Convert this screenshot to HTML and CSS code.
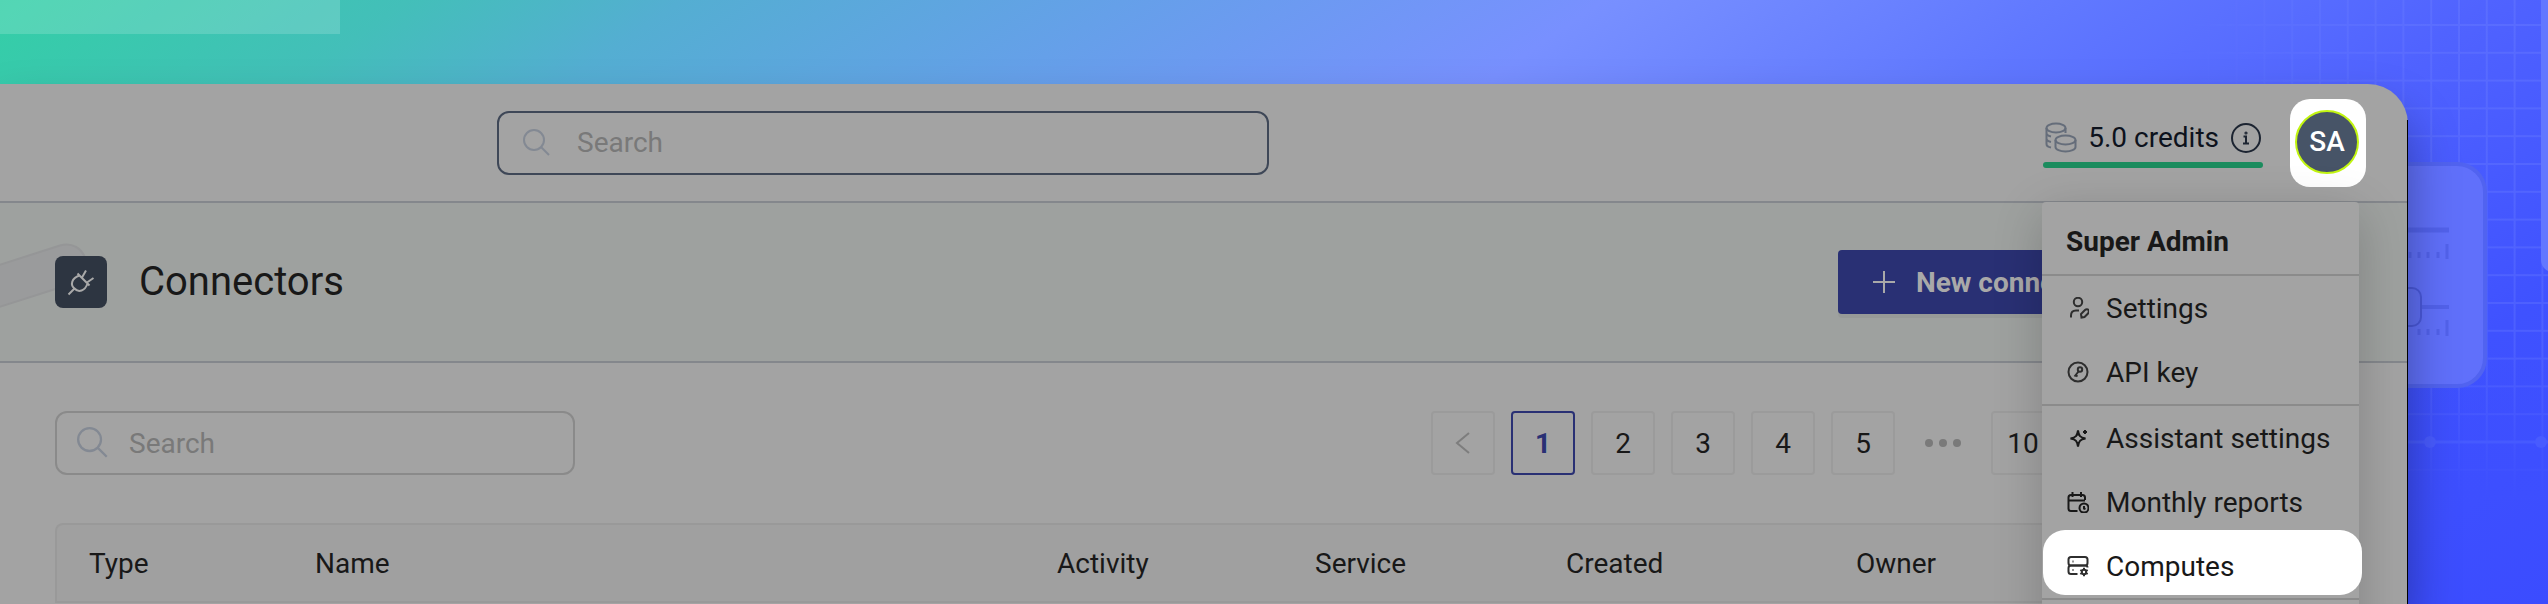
FILE: index.html
```html
<!DOCTYPE html>
<html lang="en">
<head>
<meta charset="utf-8">
<title>Connectors</title>
<link rel="stylesheet" href="styles.css">
</head>
<body>
<div class="stage">
  <div class="backdrop-strip"></div>
  <svg class="backdrop-art" width="380" height="604" viewBox="0 0 380 604" aria-hidden="true">
    <defs>
      <pattern id="grid" x="12" y="24" width="27.8" height="27.8" patternUnits="userSpaceOnUse">
        <path d="M0 1H27.8M1 0V27.8" stroke="#8c9eff" stroke-width="2" fill="none"/>
      </pattern>
      <linearGradient id="fade" x1="0" x2="1" y1="0" y2="0">
        <stop offset="0" stop-color="#fff" stop-opacity="0"/>
        <stop offset=".6" stop-color="#fff" stop-opacity=".16"/>
        <stop offset="1" stop-color="#fff" stop-opacity=".2"/>
      </linearGradient>
      <linearGradient id="fadeDown" x1="0" x2="0" y1="0" y2="1">
        <stop offset=".5" stop-color="#3d4fff" stop-opacity="0"/>
        <stop offset="1" stop-color="#3d4fff"/>
      </linearGradient>
      <mask id="gridMask"><rect width="380" height="500" fill="url(#fade)"/></mask>
    </defs>
    <rect width="380" height="500" fill="url(#grid)" mask="url(#gridMask)"/>
    <rect y="200" x="240" width="140" height="300" fill="url(#fadeDown)"/>
    <path d="M240 442H380" stroke="#465aff" stroke-width="3"/>
    <circle cx="262" cy="442" r="6" fill="#485bff"/>
    <circle cx="373" cy="442" r="6" fill="#485bff"/>
    <rect x="150" y="164" width="167" height="222" rx="28" fill="#6070fb" stroke="#5163f0" stroke-width="4"/>
    <path d="M230 230H281" stroke="#5262ec" stroke-width="5"/>
    <path d="M230 307H281" stroke="#5262ec" stroke-width="4"/>
    <path d="M242 252v6M251 252v6M260 252v6M270 252v6M279 244v15M251 329v6M260 329v6M270 329v6M279 320v16" stroke="#5262ec" stroke-width="3"/>
    <rect x="200" y="288" width="53" height="38" rx="9" fill="#5f6ff5" stroke="#4a59dc" stroke-width="2"/>
    <rect x="373" y="-20" width="40" height="292" rx="12" fill="#6277ff"/>
  </svg>

  <div class="card">
    <header class="topbar">
      <label class="search search-global">
        <svg class="icon-search" viewBox="0 0 28 28" width="28" height="28" aria-hidden="true"><circle cx="11" cy="11" r="10"/><path d="M18 18l8 8"/></svg>
        <input type="search" placeholder="Search" aria-label="Search everywhere">
      </label>
      <div class="account">
        <div class="credits">
          <div class="credits-line">
            <svg class="icon-coins" viewBox="0 0 32 32" width="32" height="32" aria-hidden="true">
              <ellipse cx="11" cy="6" rx="9.5" ry="4.5"/><path d="M1.500 6V22c0 1.500 1.500 3 4.500 3.500M1.500 11c0 1.500 2 3 4.500 3.500M1.500 16.500c0 1.500 2 3 4.500 3.500M20.500 6v5"/>
              <ellipse cx="20.500" cy="18" rx="10" ry="4.500"/><path d="M10.500 18v7c0 2.500 4.500 4.500 10 4.500s10-2 10-4.500v-7"/>
            </svg>
            <span>5.0 credits</span>
            <svg class="icon-info" viewBox="0 0 32 32" width="32" height="32" aria-hidden="true">
              <circle cx="16" cy="16" r="14"/><path d="M13.500 14.500H16v7M13 21.500h6"/><circle cx="16" cy="11" r=".6"/>
            </svg>
          </div>
          <div class="credits-bar"></div>
        </div>
        <div class="avatar-spot"><button class="avatar" type="button">SA</button></div>
      </div>
    </header>

    <section class="title-band">
      <svg class="band-art" width="90" height="80" viewBox="0 0 90 80" aria-hidden="true"><path d="M-4 24L60 3.500C72 0 82 6 86 18S80 40 68 43L-4 66Z" fill="#9a9b9c" stroke="#959697" stroke-width="2"/></svg>
      <span class="title-icon">
        <svg viewBox="0 0 32 32" width="32" height="32" aria-hidden="true"><path d="M12.500 7.500L24.500 19.500M14.500 9.500C6.500 12 5 19 9.500 22.500 13.500 27 20 25 22.500 17.500M9.500 22.500L3.500 28.500M17 11.500L21 4.500M22 16.500L28.500 12"/></svg>
      </span>
      <h1>Connectors</h1>
      <button class="primary" type="button">
        <svg viewBox="0 0 24 24" width="24" height="24" aria-hidden="true"><path d="M12 1v22M1 12h22"/></svg>
        New connector
      </button>
    </section>

    <main class="content">
      <div class="toolbar">
        <label class="search search-local">
          <svg class="icon-search" viewBox="0 0 28 28" width="32" height="32" aria-hidden="true"><circle cx="11" cy="11" r="10"/><path d="M18 18l8 8"/></svg>
          <input type="search" placeholder="Search" aria-label="Search connectors">
        </label>
        <nav class="pages" aria-label="Pages">
          <button type="button" aria-label="Previous"><svg viewBox="0 0 20 20" width="20" height="24" aria-hidden="true"><path d="M16 0L4 10 16 20"/></svg></button>
          <button type="button" class="current">1</button>
          <button type="button">2</button>
          <button type="button">3</button>
          <button type="button">4</button>
          <button type="button">5</button>
          <span class="more"><i></i><i></i><i></i></span>
          <button type="button">10</button>
        </nav>
      </div>
      <div class="table-frame">
        <table>
          <thead>
            <tr>
              <th class="col-type">Type</th>
              <th>Name</th>
              <th class="col-activity">Activity</th>
              <th class="col-service">Service</th>
              <th class="col-created">Created</th>
              <th class="col-owner">Owner</th>
            </tr>
          </thead>
        </table>
      </div>
    </main>

    <div class="menu">
      <div class="menu-title">Super Admin</div>
      <div class="menu-group">
        <button type="button">
          <svg viewBox="0 0 22 22" width="22" height="22" aria-hidden="true"><circle cx="11" cy="5" r="4.200"/><path d="M4 20.500v-2c0-3 2-5 5-5h3M14.500 20.500l-.5-3.500 4-4c1-1 3-1 3.500 0 .5 1 .5 2-.5 3.500l-3.500 3.500z"/></svg>
          Settings
        </button>
        <button type="button">
          <svg viewBox="0 0 22 22" width="22" height="22" aria-hidden="true"><circle cx="11" cy="11" r="9.500"/><circle cx="13" cy="8.500" r="2.200"/><path d="M11.500 10.500L7.500 15.500M8.500 14l2 1.500"/></svg>
          API key
        </button>
      </div>
      <div class="menu-group">
        <button type="button">
          <svg viewBox="0 0 22 22" width="22" height="22" class="bold" aria-hidden="true"><path d="M11 3.500C11.800 9 13 10.500 18.500 11.500 13 12.500 11.800 14 11 19.500 10.200 14 9 12.500 3.500 11.500 9 10.500 10.200 9 11 3.500Z"/><path d="M18 3v4M16 5h4"/></svg>
          Assistant settings
        </button>
        <button type="button">
          <svg viewBox="0 0 22 22" width="22" height="22" class="bold" aria-hidden="true"><path d="M10.500 20H4c-1.500 0-2.500-1-2.500-2.500v-11C1.500 5 2.500 4 4 4h11.500C17 4 18 5 18 6.500V9M1.500 9.500H18M5.500 1v5M14 1v5"/><circle cx="17" cy="17" r="4.500"/><path d="M17 15v2.500l1.500.5"/></svg>
          Monthly reports
        </button>
        <button type="button" class="spot">
          <svg viewBox="0 0 22 22" width="22" height="22" aria-hidden="true"><rect x="1.500" y="2" width="19" height="8.500" rx="2.500"/><path d="M20.500 12.500c0-1.500-1-2-2.500-2H4C2.500 10.500 1.500 11.500 1.500 13v3.500C1.500 18 2.500 19 4 19h6.500M5.500 6.500h1M5.500 15h1"/><circle cx="17" cy="17" r="2.200"/><path d="M17 12.800v2M17 19.200v2M13.300 15l1.800 1M18.900 18l1.800 1M13.300 19l1.800-1M18.900 16l1.800-1"/></svg>
          Computes
        </button>
      </div>
    </div>
  </div>
</div>
</body>
</html>
```
FILE: styles.css
```css
* {
  box-sizing: border-box;
}

body {
  margin: 0;
  font-family: Roboto, "Liberation Sans", sans-serif;
  font-size: 28px;
  line-height: 33px;
  color: #181818;
}

button,
input {
  font: inherit;
  color: inherit;
  margin: 0;
  padding: 0;
  border: 0;
  background: none;
}

svg {
  fill: none;
  stroke: currentColor;
  stroke-width: 2;
  flex: none;
}

.stage {
  position: relative;
  display: flex;
  height: 100vh;
  overflow: hidden;
  padding: 84px 140px 0 0;
  background: linear-gradient(145deg, #33cfa6 0%, #43bfb9 12%, #54aed2 20%, #65a0e9 33%, #7890ff 47%, #6078ff 61%, #5063ff 73%, #3f52ff 87%, #3b4cff 100%);
}

.backdrop-strip {
  position: absolute;
  top: 0;
  left: 0;
  width: 340px;
  height: 34px;
  background: rgba(255, 255, 255, 0.16);
}

.backdrop-art {
  position: absolute;
  top: 0;
  right: 0;
  stroke: none;
}

.card {
  position: relative;
  flex: 1;
  min-width: 0;
  background: #a3a3a3;
  border-radius: 0 40px 0 0;
  box-shadow: 0 30px 50px rgba(0, 0, 0, 0.35);
}

.card::after {
  content: "";
  position: absolute;
  top: 36px;
  right: 0;
  bottom: 0;
  width: 1px;
  background: #000;
}

.topbar {
  display: flex;
  align-items: center;
  justify-content: space-between;
  height: 119px;
  padding: 0 42px 0 497px;
  border-bottom: 2px solid #84878c;
}

.search {
  display: flex;
  align-items: center;
  height: 64px;
  border-radius: 12px;
}

.search input {
  flex: 1;
  min-width: 0;
  outline: 0;
}

.search input::placeholder {
  color: #797979;
  opacity: 1;
}

.icon-search {
  color: #838993;
}

.search-global {
  width: 772px;
  padding: 0 24px;
  gap: 26px;
  border: 2px solid #3e4757;
}

.search-local {
  width: 520px;
  padding: 0 20px;
  gap: 20px;
  border: 2px solid #8a8a8a;
}

.account {
  display: flex;
  align-items: center;
  gap: 27px;
}

.credits {
  padding-top: 4px;
  color: #0d121c;
}

.credits-line {
  display: flex;
  align-items: center;
  gap: 11px;
  padding: 0 1px 0 2px;
}

.icon-coins {
  color: #656d7a;
}

.icon-info {
  color: #1c2431;
}

.credits-bar {
  height: 6px;
  margin-top: 8px;
  border-radius: 3px;
  background: #1b8c5e;
}

.avatar-spot {
  padding: 11px 7px 13px 5px;
  border-radius: 20px;
  background: #fff;
}

.avatar {
  display: block;
  width: 64px;
  height: 64px;
  border: 2px solid #c2f510;
  border-radius: 50%;
  background: #475467;
  color: #fff;
  font-weight: 500;
}

.title-band {
  position: relative;
  display: flex;
  align-items: center;
  height: 160px;
  padding: 0 269px 0 55px;
  background: #9ea19f;
  border-bottom: 2px solid #84878c;
}

.band-art {
  position: absolute;
  left: 0;
  top: 39px;
}

.title-icon {
  position: relative;
  display: grid;
  place-items: center;
  width: 52px;
  height: 52px;
  border-radius: 8px;
  background: #2d3541;
  color: #a9a9a9;
}

h1 {
  margin: 0 auto 0 32px;
  font-size: 40px;
  line-height: 48px;
  font-weight: 400;
}

.primary {
  display: flex;
  align-items: center;
  gap: 20px;
  height: 64px;
  padding: 0 34px;
  border-radius: 4px;
  background: #293074;
  box-shadow: 0 4px 0 rgba(0, 0, 0, 0.04);
  color: #a9a9a9;
  font-weight: 700;
}

.content {
  padding: 48px 56px 0 55px;
}

.toolbar {
  display: flex;
  justify-content: space-between;
  padding-right: 297px;
}

.pages {
  display: flex;
  gap: 16px;
}

.pages button,
.more {
  display: grid;
  place-items: center;
  width: 64px;
  height: 64px;
}

.pages button {
  border: 2px solid #9b9b9b;
  border-radius: 4px;
}

.pages .current {
  border-color: #293074;
  color: #293074;
  font-weight: 700;
}

.pages svg {
  color: #7d7d7d;
}

.more {
  grid-auto-flow: column;
  justify-content: center;
  gap: 6px;
}

.more i {
  width: 8px;
  height: 8px;
  border-radius: 50%;
  background: #7a7a7a;
}

.table-frame {
  margin-top: 48px;
  border: 2px solid #999;
  border-bottom: 0;
  border-radius: 8px 8px 0 0;
  background: #a0a0a0;
}

table {
  width: 100%;
  table-layout: fixed;
  border-collapse: separate;
  border-spacing: 0;
}

th {
  height: 78px;
  padding: 0 32px;
  border-bottom: 2px solid #999;
  font-weight: 400;
  text-align: left;
}

.col-type {
  width: 226px;
}

.col-activity {
  width: 258px;
}

.col-service {
  width: 251px;
}

.col-created {
  width: 290px;
}

.col-owner {
  width: 526px;
}

.menu {
  position: absolute;
  top: 118px;
  right: 49px;
  width: 317px;
  padding: 8px 0 64px;
  border-radius: 4px;
  background: #a3a3a3;
  box-shadow: 0 12px 50px rgba(0, 0, 0, 0.2);
}

.menu-title {
  padding: 15px 24px 16px;
  font-weight: 700;
  border-bottom: 2px solid #8b8b8b;
}

.menu-group {
  border-bottom: 2px solid #8b8b8b;
}

.menu button {
  position: relative;
  display: flex;
  align-items: center;
  gap: 17px;
  width: 100%;
  height: 64px;
  padding: 0 25px;
  text-align: left;
  white-space: nowrap;
}

.menu svg {
  color: #2e2e2e;
}

.menu .bold {
  color: #181818;
}

.menu .spot {
  isolation: isolate;
}

.spot::before {
  content: "";
  position: absolute;
  inset: -4px -3px 3px 1px;
  z-index: -1;
  border-radius: 22px;
  background: #fff;
}
```
